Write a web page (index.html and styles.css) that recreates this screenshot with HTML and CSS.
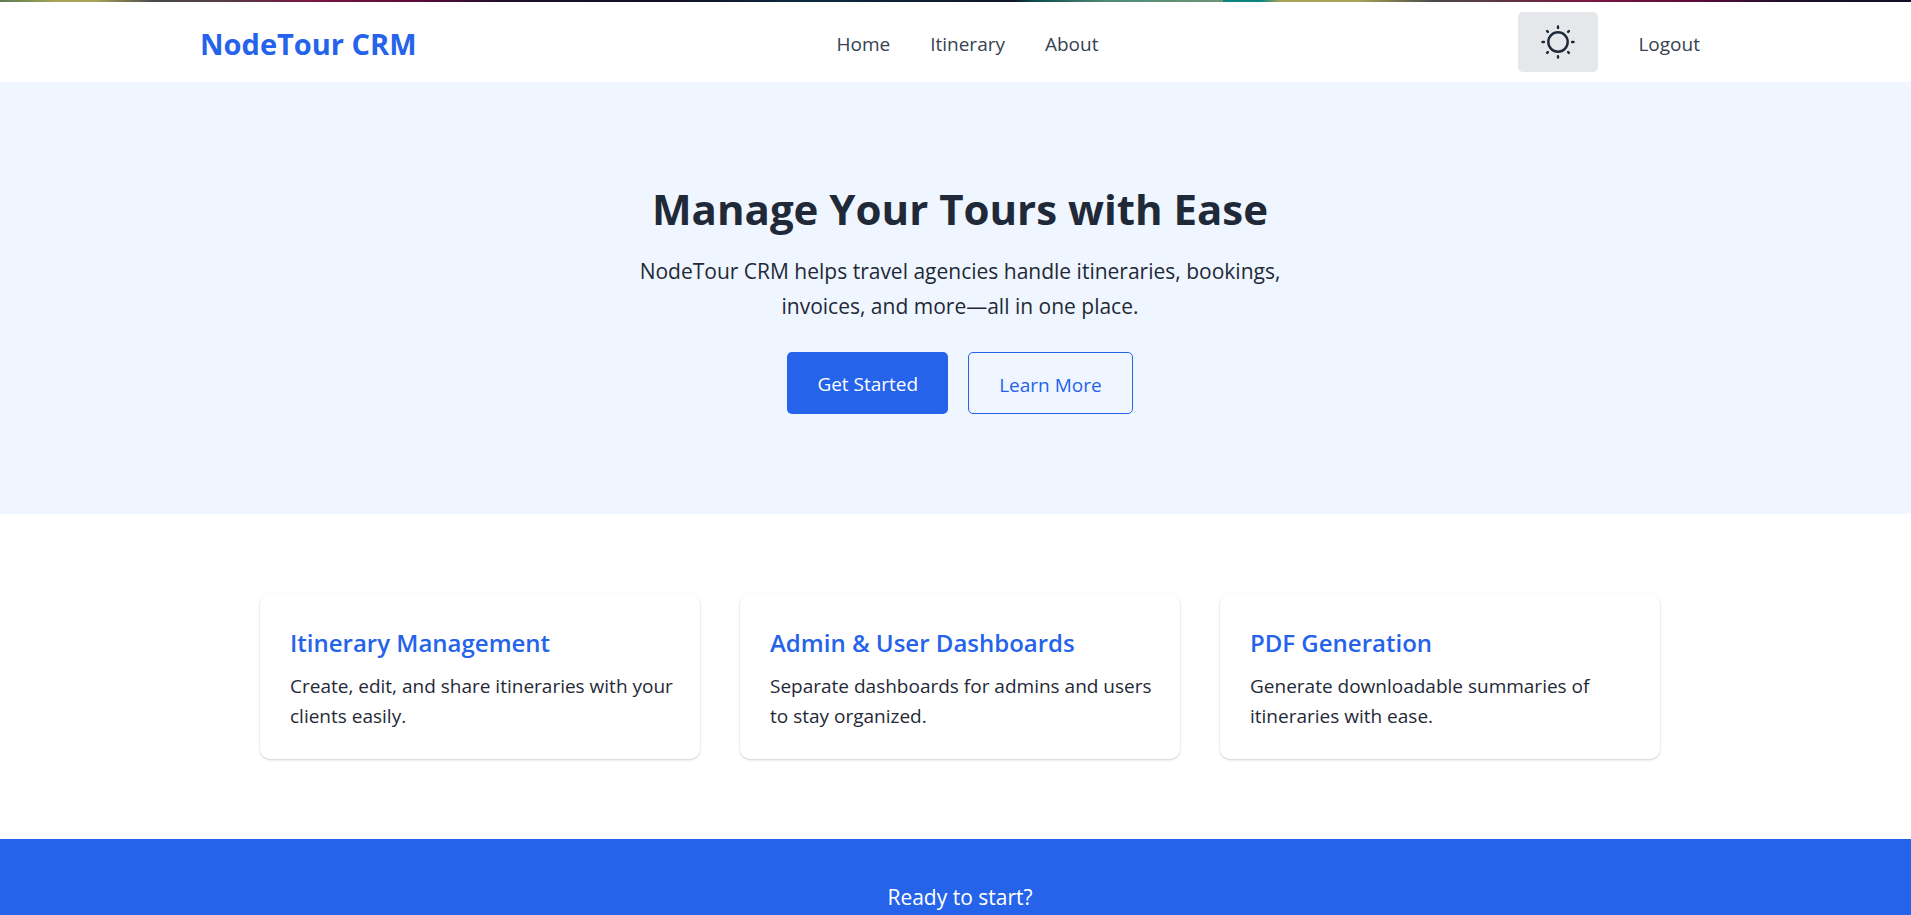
FILE: index.html
```html
<!DOCTYPE html>
<html lang="en">
<head>
<meta charset="utf-8">
<title>NodeTour CRM</title>
<link rel="stylesheet" href="styles.css">
</head>
<body>
<div class="top-strip"></div>
<header class="header">
  <div class="header-inner">
    <a class="brand" href="#">NodeTour CRM</a>
    <nav class="nav">
      <a class="nav-link" href="#">Home</a>
      <a class="nav-link" href="#">Itinerary</a>
      <a class="nav-link" href="#">About</a>
    </nav>
    <div class="actions">
      <button class="theme-toggle" type="button" aria-label="Toggle theme">
        <svg class="sun" viewBox="0 0 34 34" fill="none" stroke="currentColor" stroke-width="2.4" stroke-linecap="round">
          <circle cx="17" cy="17" r="9.7"/>
          <path d="M17 1.5v1.4M17 31.1v1.4M1.5 17h1.4M31.1 17h1.4M6.1 6.1l.8.8M27.1 27.1l.8.8M6.1 27.9l.8-.8M27.1 6.9l.8-.8"/>
        </svg>
      </button>
      <button class="logout" type="button">Logout</button>
    </div>
  </div>
</header>
<main>
  <section class="hero">
    <h1 class="hero-title">Manage Your Tours with Ease</h1>
    <p class="hero-text">NodeTour CRM helps travel agencies handle itineraries, bookings, invoices, and more—all in one place.</p>
    <div class="hero-actions">
      <a class="btn btn-primary" href="#">Get Started</a>
      <a class="btn btn-outline" href="#">Learn More</a>
    </div>
  </section>
  <section class="features">
    <div class="feature-grid">
      <article class="card">
        <h3 class="card-title">Itinerary Management</h3>
        <p class="card-text">Create, edit, and share itineraries with your clients easily.</p>
      </article>
      <article class="card">
        <h3 class="card-title">Admin &amp; User Dashboards</h3>
        <p class="card-text">Separate dashboards for admins and users to stay organized.</p>
      </article>
      <article class="card">
        <h3 class="card-title">PDF Generation</h3>
        <p class="card-text">Generate downloadable summaries of itineraries with ease.</p>
      </article>
    </div>
  </section>
  <section class="cta">
    <p class="cta-text">Ready to start?</p>
  </section>
</main>
</body>
</html>
```
FILE: styles.css
```css
* { box-sizing: border-box; margin: 0; }
html { overflow: hidden; }
body {
  font-family: "Segoe UI", "Open Sans", sans-serif;
  font-size: 19px;
  line-height: 30px;
  color: #1f2937;
  background: #fff;
}
a { text-decoration: none; color: inherit; }
button { font: inherit; color: inherit; border: 0; background: none; padding: 0; cursor: pointer; }

.top-strip {
  height: 2px;
  background: linear-gradient(90deg, #5d7d55 0, #a9a356 3%, #a9a356 5%, #4a4a4a 8%, #553a48 12%, #7a1740 16%, #5a0a38 22%, #1b0f2b 27%, #130f28 35%, #0b2a40 42%, #12152b 53%, #0d4b4c 54%, #4f8a78 58%, #6d9474 64%, #0c8580 64%, #0c8580 66%, #a9a356 67%, #a9a356 71%, #4a4a4a 75%, #7a1740 83%, #5a0a38 89%, #1b0f2b 94%, #130f28 100%);
}

.header { padding-right: 11px; background: #fff; }
.hero, .features, .cta { padding-left: 24px; padding-right: 15px; }
.header-inner {
  max-width: 1500px;
  margin: 0 auto;
  padding: 10px 0;
  display: flex;
  align-items: center;
  justify-content: space-between;
}
.brand, .nav-link, .logout { padding-top: 4px; }
.brand { font-size: 29px; line-height: 40px; font-weight: 700; color: #2563eb; }
.nav, .actions { display: flex; align-items: center; gap: 40px; color: #374151; }
.theme-toggle {
  display: flex;
  align-items: center;
  justify-content: center;
  width: 80px;
  height: 60px;
  border-radius: 5px;
  background: #e5e7eb;
  color: #1f2937;
}
.sun { width: 34px; height: 34px; }

.hero {
  background: #eff6ff;
  padding-top: 102px;
  padding-bottom: 100px;
  text-align: center;
}
.hero-title { font-size: 42px; line-height: 50px; font-weight: 700; margin-bottom: 20px; }
.hero-text { font-size: 21px; line-height: 35px; max-width: 720px; margin: 0 auto 28px; }
.hero-actions { display: flex; justify-content: center; gap: 20px; }
.btn { padding: 17px 30px 13px; border-radius: 5px; }
.btn-primary { background: #2563eb; color: #fff; }
.btn-outline { border: 1px solid #2563eb; color: #2563eb; }

.features { padding-top: 80px; padding-bottom: 80px; }
.feature-grid {
  max-width: 1400px;
  margin: 0 auto;
  display: grid;
  grid-template-columns: repeat(3, 1fr);
  gap: 40px;
}
.card {
  padding: 31px 20px 28px 30px;
  border-radius: 10px;
  background: #fff;
  box-shadow: 0 1px 3px rgba(0, 0, 0, .1), 0 1px 2px rgba(0, 0, 0, .1);
}
.card-title { font-size: 24px; line-height: 35px; font-weight: 600; color: #2563eb; margin-bottom: 11px; }

.cta { background: #2563eb; color: #fff; padding-top: 41px; padding-bottom: 40px; text-align: center; }
.cta-text { font-size: 21px; line-height: 35px; }
```
